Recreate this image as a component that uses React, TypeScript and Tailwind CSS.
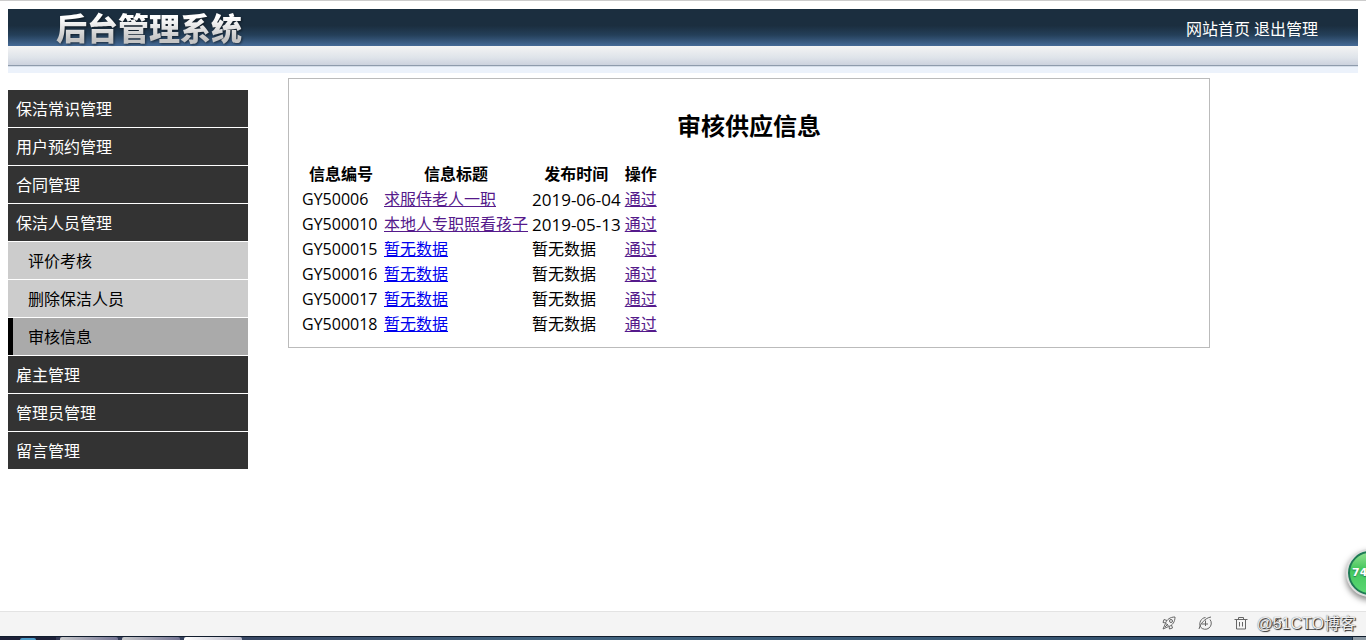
import clsx from "clsx"

type MenuItem = { label: string; sub?: boolean; active?: boolean }

const menu: MenuItem[] = [
  { label: "保洁常识管理" },
  { label: "用户预约管理" },
  { label: "合同管理" },
  { label: "保洁人员管理" },
  { label: "评价考核", sub: true },
  { label: "删除保洁人员", sub: true },
  { label: "审核信息", sub: true, active: true },
  { label: "雇主管理" },
  { label: "管理员管理" },
  { label: "留言管理" },
]

const rows = [
  { id: "GY50006", title: "求服侍老人一职", date: "2019-06-04", visited: true },
  { id: "GY500010", title: "本地人专职照看孩子", date: "2019-05-13", visited: true },
  { id: "GY500015" },
  { id: "GY500016" },
  { id: "GY500017" },
  { id: "GY500018" },
]

function Header() {
  return (
    <header>
      <div className="flex h-[37px] items-center justify-between bg-linear-to-b from-[#1b2e3f] from-45% via-[#243f59] via-70% to-[#466b97] pt-0.5 pl-12 pr-10">
        <h1 className="bg-linear-to-b from-white from-20% to-[#c4c4c4] to-80% bg-clip-text text-[31px] leading-[37px] font-black text-transparent drop-shadow-[1px_1px_1px_rgba(0,0,0,0.5)]">
          后台管理系统
        </h1>
        <nav className="flex gap-1 text-base text-white">
          <a href="#">网站首页</a>
          <a href="#">退出管理</a>
        </nav>
      </div>
      <div className="h-5 border-b border-[#8e9bac] bg-linear-to-b from-[#f4f4f4] via-[#dfe4ea] via-60% to-[#ccd2de]" />
      <div className="h-[7px] border-t border-[#d5dde8] bg-[#ecf2fb]" />
    </header>
  )
}

function Sidebar() {
  return (
    <nav className="mt-[17px] flex w-60 shrink-0 flex-col gap-px">
      {menu.map(({ label, sub, active }) => (
        <a
          key={label}
          href="#"
          className={clsx(
            "block pt-0.5 leading-[35px]",
            !sub && "bg-[#333] pl-2 text-white",
            sub && !active && "bg-[#ccc] pl-5 text-black",
            active && "border-l-5 border-black bg-[#aaa] pl-[15px] text-black",
          )}
        >
          {label}
        </a>
      ))}
    </nav>
  )
}

function SupplyTable() {
  return (
    <table className="border-separate border-spacing-x-1 border-spacing-y-0 leading-[25px]">
      <thead>
        <tr>
          <th className="min-w-[78px]">信息编号</th>
          <th>信息标题</th>
          <th>发布时间</th>
          <th>操作</th>
        </tr>
      </thead>
      <tbody>
        {rows.map(({ id, title, date, visited }) => (
          <tr key={id}>
            <td>{id}</td>
            <td>
              <a href="#" className={clsx("underline", visited ? "text-[#551a8b]" : "text-[#0000ee]")}>
                {title ?? "暂无数据"}
              </a>
            </td>
            <td className={clsx(date && "text-[17px]")}>{date ?? "暂无数据"}</td>
            <td>
              <a href="#" className="text-[#551a8b] underline">通过</a>
            </td>
          </tr>
        ))}
      </tbody>
    </table>
  )
}

function StatusBar() {
  return (
    <div className="flex h-[25px] items-center justify-end border-t border-[#e3e3e3] bg-[#f4f4f4] pr-2.5 pb-0.5 text-[#666]">
      <div className="flex items-center gap-[22px] pr-2">
        <button type="button" aria-label="加速">
          <svg className="size-3.5" viewBox="0 0 14 14" fill="none" stroke="currentColor">
            <path d="M3.500 7C5 3.500 8 1 13 1c0 5-2.500 8-6 9.500zM5 4.500 2 3.500 1 6.500l2.500.5M9.500 9l1 3L7.500 13 7 10.500M3.500 7.500 1 13l5.500-2.500M3 11l3-3" />
            <circle cx="9" cy="5" r="1.500" />
          </svg>
        </button>
        <button type="button" aria-label="浏览模式">
          <svg className="size-3.5" viewBox="0 0 14 14" fill="none" stroke="currentColor">
            <path d="M12 3.500A6 6 0 1 1 2.500 11C.5 7 3 2 7.500 1.500M1 13C2.500 7.500 7 2 13 1M4 8h6M7.500 4.500V10" />
          </svg>
        </button>
        <button type="button" aria-label="清理">
          <svg className="size-3.5" viewBox="0 0 14 14" fill="none" stroke="currentColor">
            <path d="M.5 3.500h13M4.500 3.500v-2h5v2M2.500 3.500v9.500h9V3.500M5.500 6v4.500M8.500 6v4.500" />
          </svg>
        </button>
      </div>
      <div className="relative">
        <svg className="absolute left-4 top-1.5 h-3.5 w-12" viewBox="0 0 48 14" fill="none" stroke="currentColor">
          <path d="M1 5h2l3-3v10L3 9H1zM9 4q2 3 0 6M34 2v10.500h10" />
        </svg>
        <span className="relative font-['Liberation_Sans','Noto_Sans_CJK_SC',sans-serif] text-base leading-5 text-[#eee] [text-shadow:1px_1px_1px_#222,0_0_1px_#666]">
          @51CTO博客
        </span>
      </div>
    </div>
  )
}

function Taskbar() {
  return (
    <div className="flex h-1 items-end gap-1 border-t border-[#101c2c] bg-linear-to-r from-[#30324e] via-[#426480] via-40% to-[#2f4b68]">
      <div className="flex h-[3px] w-14 justify-center bg-[#1d2138]">
        <div className="h-0.5 w-4 self-end rounded-t-full bg-[#4c9bc8]" />
      </div>
      <div className="h-[3px] w-[58px] rounded-t-xs bg-linear-to-r from-[#c9cacc] to-[#757594]" />
      <div className="h-[3px] w-[58px] rounded-t-xs bg-linear-to-r from-[#c9cacc] to-[#757594]" />
      <div className="h-[3px] w-[58px] rounded-t-xs bg-linear-to-r from-white to-[#b8b8c8]" />
      <div className="ml-auto h-[3px] w-3.5 border-l border-[#1a2a3c] bg-[#8b98a3]" />
    </div>
  )
}

export default function App() {
  return (
    <div className="relative flex min-h-screen flex-col overflow-hidden border-t border-[#ccc] bg-white font-['Open_Sans','Noto_Sans_CJK_SC',sans-serif] text-base text-black">
      <div className="px-2 pt-2">
        <Header />
        <div className="flex items-start gap-10">
          <Sidebar />
          <main className="mt-[5px] w-full max-w-[922px] border border-[#bbb] px-[9px] pt-[31px] pb-2.5">
            <h2 className="mb-5 text-center text-2xl leading-8 font-bold">审核供应信息</h2>
            <SupplyTable />
          </main>
        </div>
      </div>

      <div className="mt-auto">
        <StatusBar />
        <Taskbar />
      </div>

      <div className="absolute -right-7 bottom-[43px] size-12 rounded-full border-2 border-[#ddd] bg-white shadow-[0_3px_6px_rgba(0,0,0,0.5)]">
        <div className="flex size-11 items-center rounded-full border-2 border-[#1f7a55] bg-linear-to-b from-[#8de08f] via-[#43c65c] via-40% to-[#5bd873] pl-0.5 font-['DejaVu_Sans',sans-serif] text-[11px] font-bold text-white [text-shadow:0_1px_1px_#1f7a55]">
          74
        </div>
      </div>
    </div>
  )
}
